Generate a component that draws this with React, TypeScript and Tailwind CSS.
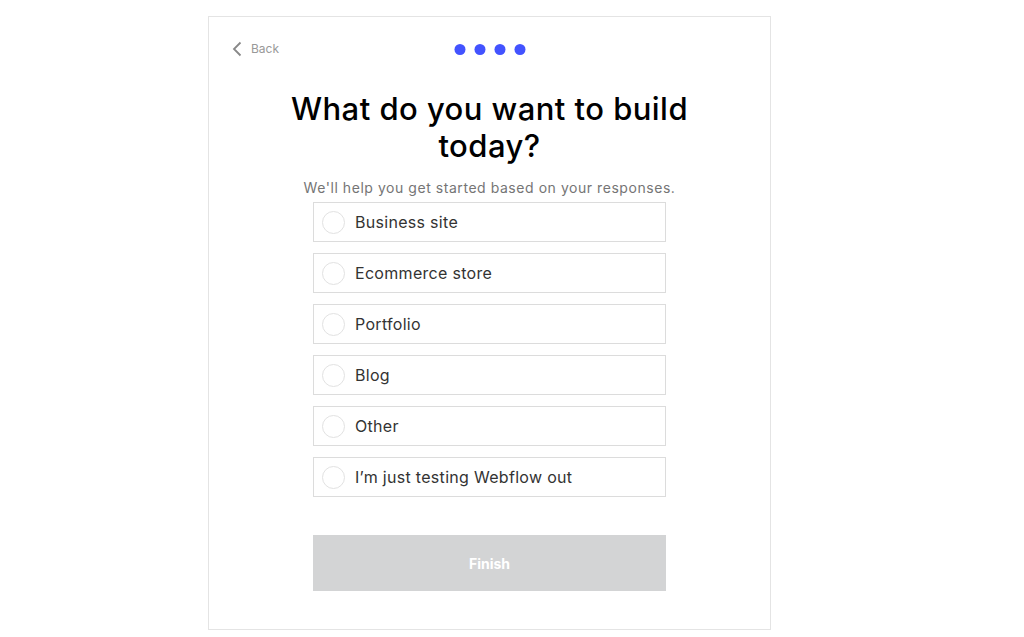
import { useState } from "react";

const options = [
  "Business site",
  "Ecommerce store",
  "Portfolio",
  "Blog",
  "Other",
  "I\u2019m just testing Webflow out",
];

export default function App() {
  const [selected, setSelected] = useState<string | null>(null);

  return (
    <div className="min-h-[637px] bg-white pl-[208px] pt-[16px] font-['Inter',sans-serif]">
      <div className="flex h-[614px] w-[563px] flex-col border border-[#e4e4e4] bg-white">
        <div className="relative flex h-[62px] items-center px-[23px] pt-[2px]">
          <button className="flex items-center gap-[9px] text-[12px] text-[#999]">
            <svg width="10" height="16" viewBox="0 0 10 16" fill="none">
              <path d="M8.5 1.5 2 8l6.5 6.5" stroke="#888" strokeWidth="1.8" />
            </svg>
            Back
          </button>
          <div className="absolute left-1/2 top-[27px] flex -translate-x-1/2 gap-[9px]">
            {[0, 1, 2, 3].map((i) => (
              <span key={i} className="h-[11px] w-[11px] rounded-full bg-[#4353ff]" />
            ))}
          </div>
        </div>

        <h1 className="mx-auto mt-[11px] w-[440px] text-center text-[31px] font-medium leading-[37px] tracking-[0.45px] text-black">
          What do you want to build today?
        </h1>
        <p className="mt-[13px] text-center text-[14px] tracking-[0.55px] text-[#757575]">
          We&apos;ll help you get started based on your responses.
        </p>

        <div className="mx-auto mt-[4px] flex w-[353px] flex-col gap-[11px]">
          {options.map((o) => (
            <button
              key={o}
              onClick={() => setSelected(o)}
              className="flex h-[40px] items-center gap-[10px] border border-[#dcdcdc] px-[8px] text-left text-[16px] tracking-[0.3px] text-[#333]"
            >
              <span
                className={
                  "h-[23px] w-[23px] rounded-full border " +
                  (selected === o ? "border-[6px] border-[#4353ff]" : "border-[#e2e2e2]")
                }
              />
              {o}
            </button>
          ))}
        </div>

        <button
          disabled={!selected}
          className="mx-auto mt-[38px] h-[56px] w-[353px] bg-[#d3d4d5] text-[14px] font-bold text-white"
        >
          Finish
        </button>
      </div>
    </div>
  );
}
